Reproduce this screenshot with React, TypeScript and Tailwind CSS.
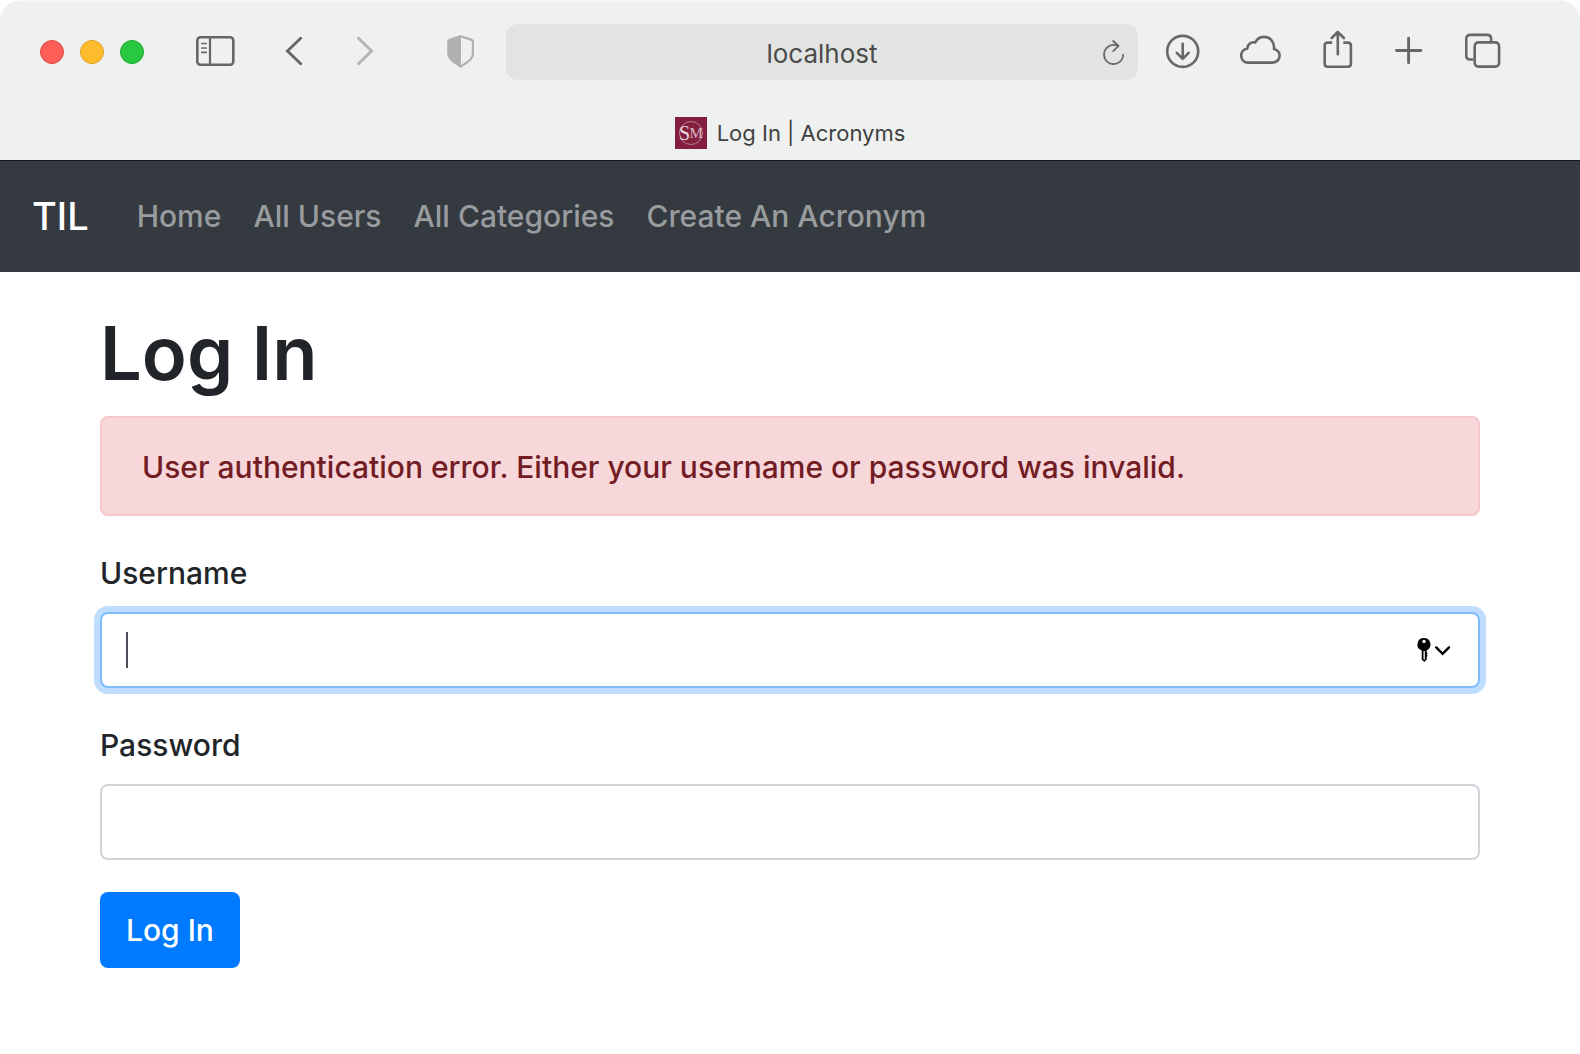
import type { ReactNode } from "react";

const navLinks = ["Home", "All Users", "All Categories", "Create An Acronym"];

function Icon({ width, className = "", children }: { width: number; className?: string; children: ReactNode }) {
  return (
    <svg
      width={width}
      height="44"
      viewBox={`0 0 ${width} 44`}
      fill="none"
      stroke="currentColor"
      strokeWidth="2.6"
      strokeLinecap="round"
      strokeLinejoin="round"
      className={`block shrink-0 ${className}`}
      aria-hidden="true"
    >
      {children}
    </svg>
  );
}

function WindowControls() {
  return (
    <div className="flex shrink-0 gap-4">
      <button aria-label="Close window" className="size-6 rounded-full border border-[#e2463f] bg-[#ff5f57]" />
      <button aria-label="Minimise window" className="size-6 rounded-full border border-[#e1a116] bg-[#febc2e]" />
      <button aria-label="Zoom window" className="size-6 rounded-full border border-[#12ac28] bg-[#28c840]" />
    </div>
  );
}

function Toolbar() {
  return (
    <div className="flex h-[104px] items-center pr-[79px] pl-10 text-[#666766]">
      <WindowControls />
      <button aria-label="Toggle sidebar" className="ml-[52px]">
        <Icon width={40}>
          <rect x="1.3" y="7.3" width="36" height="27.4" rx="3.2" />
          <path d="M14 7.5v27" strokeWidth="2.2" />
          <path d="M5.8 13.5h4.4M5.8 18h4.4M5.8 22.4h4.4" strokeWidth="1.7" />
        </Icon>
      </button>
      <button aria-label="Back" className="ml-12">
        <Icon width={20}>
          <path d="M16.7 8.2 3.5 21l13.2 12.7" strokeWidth="2.9" strokeLinejoin="miter" />
        </Icon>
      </button>
      <button aria-label="Forward" disabled className="ml-[52px]">
        <Icon width={20} className="text-[#b2b4b3]">
          <path d="M2.4 8.2 15.6 21 2.4 33.7" strokeWidth="2.9" strokeLinejoin="miter" />
        </Icon>
      </button>
      <button aria-label="Privacy report" className="ml-[71px]">
        <Icon width={28} className="text-[#afb1b0]">
          <path
            d="M13.7 6.2 24.7 9.9q1.2.5 1.2 1.7v12.2c0 4.5-3.2 7.2-12.2 12.8C4.7 31 1.3 28.3 1.3 23.8V11.6q0-1.2 1.2-1.7Z"
            strokeWidth="2.2"
          />
          <path d="M14 5.5 2.2 9.500 1.200 11v13c0 4 3.300 7.200 12.800 12.500Z" fill="currentColor" stroke="none" />
        </Icon>
      </button>
      <div className="ml-[31px] flex h-14 min-w-0 flex-1 items-center rounded-xl bg-[#e2e4e3] pr-3">
        <input
          aria-label="Address"
          defaultValue="localhost"
          className="min-w-0 flex-1 bg-transparent pt-0.5 pl-9 text-center text-[26px] text-[#4a4b4a] outline-none"
        />
        <button aria-label="Reload page">
          <Icon width={24}>
            <path d="M21.2 24.5a9.6 9.6 0 1 1-4.9-8.400" strokeWidth="1.7" />
            <path d="m11.1 11 5.5 4.9-5.4 5.2" strokeWidth="1.7" />
          </Icon>
        </button>
      </div>
      <button aria-label="Downloads" className="ml-7">
        <Icon width={36}>
          <circle cx="16.7" cy="21.4" r="15.5" />
          <path d="M16.7 13.8v15M10.8 22.8l5.9 6 5.9-6" />
        </Icon>
      </button>
      <button aria-label="iCloud tabs" className="ml-9">
        <Icon width={44}>
          <path d="M10.2 32.6C5 32.6 3.2 28.6 3.2 25.500c0-3.700 2.600-6.400 6-6.800.2-4.200 3.800-7.300 8-6.200 1.700-3.200 4.700-5.600 8.600-5.600 6.700 0 11 5.600 10.200 12.100 3.400 1 5.600 3.300 5.600 6.600 0 3.800-2.800 7-7 7Z" />
        </Icon>
      </button>
      <button aria-label="Share" className="ml-10">
        <Icon width={32}>
          <path d="M10.2 12.6H5.7q-3 0-3 3v18.2q0 3 3 3h20.2q3 0 3-3V15.6q0-3-3-3h-4.6" strokeLinecap="butt" />
          <path d="M15.8 24.2V3M9.7 8l6.1-6 6.1 6" />
        </Icon>
      </button>
      <button aria-label="New tab" className="ml-[41px]">
        <Icon width={28}>
          <path d="M1.5 20.5h24.3M13.6 8.3v24.4" strokeWidth="2.9" />
        </Icon>
      </button>
      <button aria-label="Tab overview" className="ml-[42px]">
        <Icon width={36}>
          <path d="M8.5 29.5H5.2q-4 0-4-4V8.9q0-4 4-4h16.9q4 0 4 4v3" strokeLinecap="butt" />
          <rect x="9.7" y="12.4" width="24.4" height="24.2" rx="3.8" />
        </Icon>
      </button>
    </div>
  );
}

function Favicon() {
  return (
    <svg width="32" height="32" viewBox="0 0 32 32" aria-hidden="true" className="shrink-0">
      <rect width="32" height="32" fill="#821e3e" />
      <circle cx="16" cy="16" r="11.5" fill="none" stroke="#c48a9c" strokeWidth="0.9" />
      <text x="4" y="23" fill="#ecd9df" fontFamily="Liberation Serif, serif">
        <tspan fontSize="20">S</tspan>
        <tspan x="14.5" y="21" fontSize="15" fill="#dcb9c4">M</tspan>
      </text>
    </svg>
  );
}

function BrowserHeader() {
  return (
    <header className="rounded-t-[20px] border-t border-[#f6f8f7] bg-[#eff1f0]">
      <div className="-mt-px">
        <Toolbar />
        <div className="flex h-14 items-center justify-center gap-2.5 pt-0.5 text-[22px] text-[#3f4140]">
          <Favicon />
          <span>Log In | Acronyms</span>
        </div>
      </div>
    </header>
  );
}

function KeyMenuIcon() {
  return (
    <svg width="34" height="28" viewBox="1 -2 34 28" aria-hidden="true" className="overflow-visible">
      <path
        fillRule="evenodd"
        d="M7 0a6.5 6.5 0 0 1 2.7 12.400v2l1 1-1 1.200 1 1.200-1 1.200v2.400L7.200 24 4.700 21.600V12.600A6.500 6.500 0 0 1 7 0Zm0 1.800a1.700 1.700 0 1 0 0 3.400 1.700 1.700 0 0 0 0-3.400ZM6.500 13v8.200l.7.600.6-.6V13Z"
        fill="#000"
      />
      <path d="m19.200 9.400 6.400 6.400L32 9.400" fill="none" stroke="#000" strokeWidth="2.4" strokeLinecap="round" />
    </svg>
  );
}

export default function App() {
  return (
    <div className="min-h-screen bg-white font-['Inter',sans-serif] text-[#212529]">
      <BrowserHeader />
      <nav className="flex h-28 items-center border-t border-[#12161f] bg-[#343a40] px-8">
        <a href="#" className="mr-8 text-[38px] font-medium text-white">TIL</a>
        <ul className="flex text-[30px] font-medium text-[#999c9f]">
          {navLinks.map((label) => (
            <li key={label}>
              <a href="#" className="block px-4 whitespace-nowrap">{label}</a>
            </li>
          ))}
        </ul>
      </nav>
      <main className="px-[100px] pt-8 text-[30px] leading-[50px] font-medium">
        <h1 className="mb-3.5 text-[74px] leading-[98px] font-semibold">Log In</h1>
        <div role="alert" className="mb-8 rounded-lg border-2 border-[#f5c6cb] bg-[#f8d7da] px-10 pt-6 pb-[22px] text-[#721c24]">
          User authentication error. Either your username or password was invalid.
        </div>
        <form onSubmit={(event) => event.preventDefault()}>
          <label htmlFor="username" className="mb-3.5 block">Username</label>
          <div className="relative mb-8">
            <input
              id="username"
              type="text"
              className="block h-[76px] w-full rounded-lg border-2 border-[#80bdff] bg-white pr-20 pl-6 text-[#495057] ring-6 ring-[#bfdeff] outline-none"
            />
            <span aria-hidden="true" className="absolute top-5 left-[26px] h-9 w-0.5 bg-[#495057]" />
            <button type="button" aria-label="Fill saved password" className="absolute inset-y-0 right-7 flex items-center">
              <KeyMenuIcon />
            </button>
          </div>
          <label htmlFor="password" className="mb-3.5 block">Password</label>
          <input
            id="password"
            type="password"
            className="mb-8 block h-[76px] w-full rounded-lg border-2 border-[#ced4da] bg-white px-6 text-[#495057] outline-none"
          />
          <button type="submit" className="h-[76px] rounded-lg bg-[#007bff] px-[26px] text-white">Log In</button>
        </form>
      </main>
    </div>
  );
}
